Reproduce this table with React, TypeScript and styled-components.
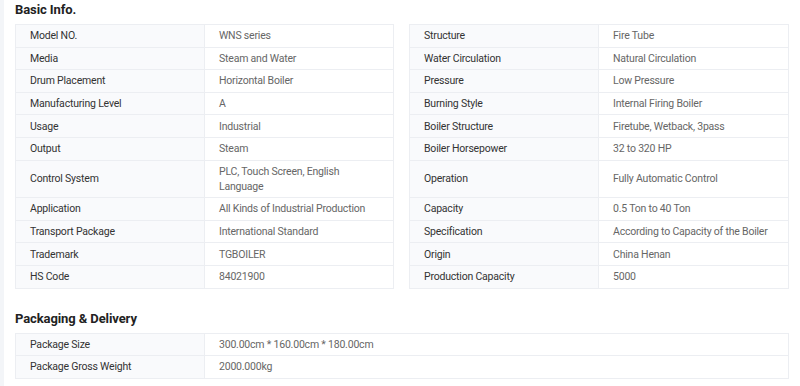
import * as React from "react"
import styled, { createGlobalStyle } from "styled-components"

const GlobalStyle = createGlobalStyle`
  html, body {
    margin: 0;
    padding: 0;
    background: #f3f5f8;
  }
  body {
    font-family: Roboto, "Liberation Sans", Arial, sans-serif;
  }
`;

const Page = styled.main`
  margin-left: 4px;
  background: #fff;
  padding: 0 12px 0 11px;
  height: 100vh;
  overflow: hidden;
  box-sizing: border-box;
`;

const Section = styled.section`
  margin-bottom: 20px;
`;

const Title = styled.h2`
  margin: 0;
  padding-top: 1px;
  height: 23px;
  line-height: 18px;
  font-size: 13px;
  letter-spacing: -0.1px;
  font-weight: 700;
  color: #222;
`;

const Columns = styled.div`
  display: grid;
  grid-template-columns: 379px 380px;
  column-gap: 15px;
  align-items: start;
`;

const Table = styled.div`
  border: 1px solid #eceef2;
  border-bottom: none;
`;

const WideTable = styled(Table)`
  width: 772px;
`;

const Row = styled.div`
  display: grid;
  grid-template-columns: 189px 1fr;
  border-bottom: 1px solid #eceef2;
`;

const Cell = styled.div<{ $label?: boolean; $tall?: boolean }>`
  display: flex;
  align-items: center;
  min-height: ${(p) => (p.$tall ? "36.6px" : "21.6px")};
  padding: 0 14px;
  font-size: 10.5px;
  letter-spacing: -0.2px;
  line-height: 15px;
  color: ${(p) => (p.$label ? "#333" : "#666")};
  background: ${(p) => (p.$label ? "#f9fafc" : "#fff")};
  border-right: ${(p) => (p.$label ? "1px solid #eceef2" : "none")};
`;

type Item = { label: string; value: string };

const leftRows: Item[] = [
  { label: "Model NO.", value: "WNS series" },
  { label: "Media", value: "Steam and Water" },
  { label: "Drum Placement", value: "Horizontal Boiler" },
  { label: "Manufacturing Level", value: "A" },
  { label: "Usage", value: "Industrial" },
  { label: "Output", value: "Steam" },
  { label: "Control System", value: "PLC, Touch Screen, English Language" },
  { label: "Application", value: "All Kinds of Industrial Production" },
  { label: "Transport Package", value: "International Standard" },
  { label: "Trademark", value: "TGBOILER" },
  { label: "HS Code", value: "84021900" },
];

const rightRows: Item[] = [
  { label: "Structure", value: "Fire Tube" },
  { label: "Water Circulation", value: "Natural Circulation" },
  { label: "Pressure", value: "Low Pressure" },
  { label: "Burning Style", value: "Internal Firing Boiler" },
  { label: "Boiler Structure", value: "Firetube, Wetback, 3pass" },
  { label: "Boiler Horsepower", value: "32 to 320 HP" },
  { label: "Operation", value: "Fully Automatic Control" },
  { label: "Capacity", value: "0.5 Ton to 40 Ton" },
  { label: "Specification", value: "According to Capacity of the Boiler" },
  { label: "Origin", value: "China Henan" },
  { label: "Production Capacity", value: "5000" },
];

const packRows: Item[] = [
  { label: "Package Size", value: "300.00cm * 160.00cm * 180.00cm" },
  { label: "Package Gross Weight", value: "2000.000kg" },
];

// row 6 is the two-line one in both halves
const InfoRows = ({ rows, tallIndex }: { rows: Item[]; tallIndex?: number }) => (
  <>
    {rows.map((r, i) => (
      <Row key={r.label}>
        <Cell $label $tall={i === tallIndex}>{r.label}</Cell>
        <Cell $tall={i === tallIndex}>{r.value}</Cell>
      </Row>
    ))}
  </>
);

export default function App() {
  return (
    <>
      <GlobalStyle />
      <Page>
        <Section>
          <Title>Basic Info.</Title>
          <Columns>
            <Table>
              <InfoRows rows={leftRows} tallIndex={6} />
            </Table>
            <Table>
              <InfoRows rows={rightRows} tallIndex={6} />
            </Table>
          </Columns>
        </Section>
        <Section>
          <Title>Packaging &amp; Delivery</Title>
          <WideTable>
            <InfoRows rows={packRows} />
          </WideTable>
        </Section>
      </Page>
    </>
  )
}
